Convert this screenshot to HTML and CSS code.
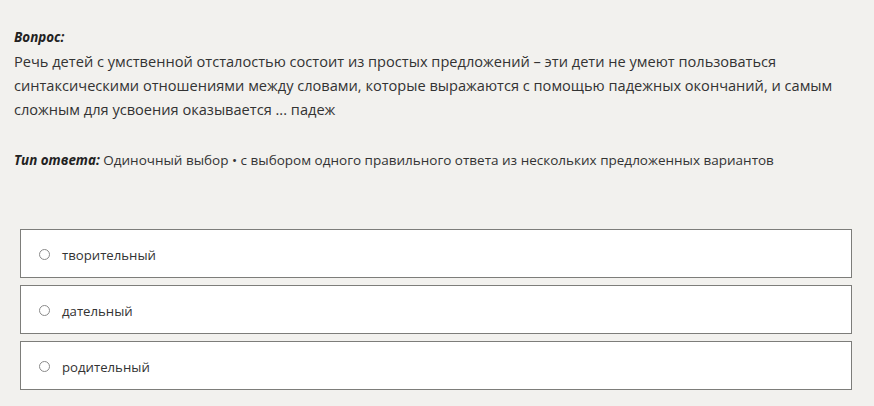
FILE: index.html
```html
<!DOCTYPE html>
<html lang="ru">
<head>
    <meta charset="UTF-8">
    <meta name="viewport" content="width=device-width, initial-scale=1.0">
    <title>Вопрос</title>
    <link rel="stylesheet" href="styles.css">
</head>
<body>
    <div class="question">
        <div class="label">Вопрос:</div>
        <div class="text">Речь детей с умственной отсталостью состоит из простых предложений – эти дети не умеют пользоваться синтаксическими отношениями между словами, которые выражаются с помощью падежных окончаний, и самым сложным для усвоения оказывается ... падеж</div>
    </div>
    <div class="answer-type">
        <span class="label">Тип ответа:</span> Одиночный выбор • с выбором одного правильного ответа из нескольких предложенных вариантов
    </div>
    <div class="options">
        <div class="option"><span class="radio"></span>творительный</div>
        <div class="option"><span class="radio"></span>дательный</div>
        <div class="option"><span class="radio"></span>родительный</div>
    </div>
</body>
</html>
```

FILE: styles.css
```css
body{
    margin: 0;
    padding: 25px 22px 0 14px;
    background-color: #f2f1ee;
    font-family: "Open Sans", "Noto Sans", sans-serif;
    font-size: 14px;
    line-height: 24px;
    color: #333333;
}
.label{
    font-size: 13.4px;
    font-weight: bold;
    font-style: italic;
    color: #222222;
}
.text{
    font-size: 14.6px;
    max-width: 840px;
}
.answer-type{
    margin-top: 27px;
    font-size: 13.5px;
}
.options{
    display: flex;
    flex-direction: column;
    gap: 7px;
    margin-top: 57px;
    margin-left: 6px;
}
.option{
    display: flex;
    align-items: center;
    height: 45px;
    padding: 2px 0 0 18px;
    font-size: 13.2px;
    background-color: #ffffff;
    border: 1px solid #7d7d7a;
}
.radio{
    width: 9px;
    height: 9px;
    border: 1px solid #8a8a8a;
    border-radius: 50%;
    margin-right: 12px;
}
```
